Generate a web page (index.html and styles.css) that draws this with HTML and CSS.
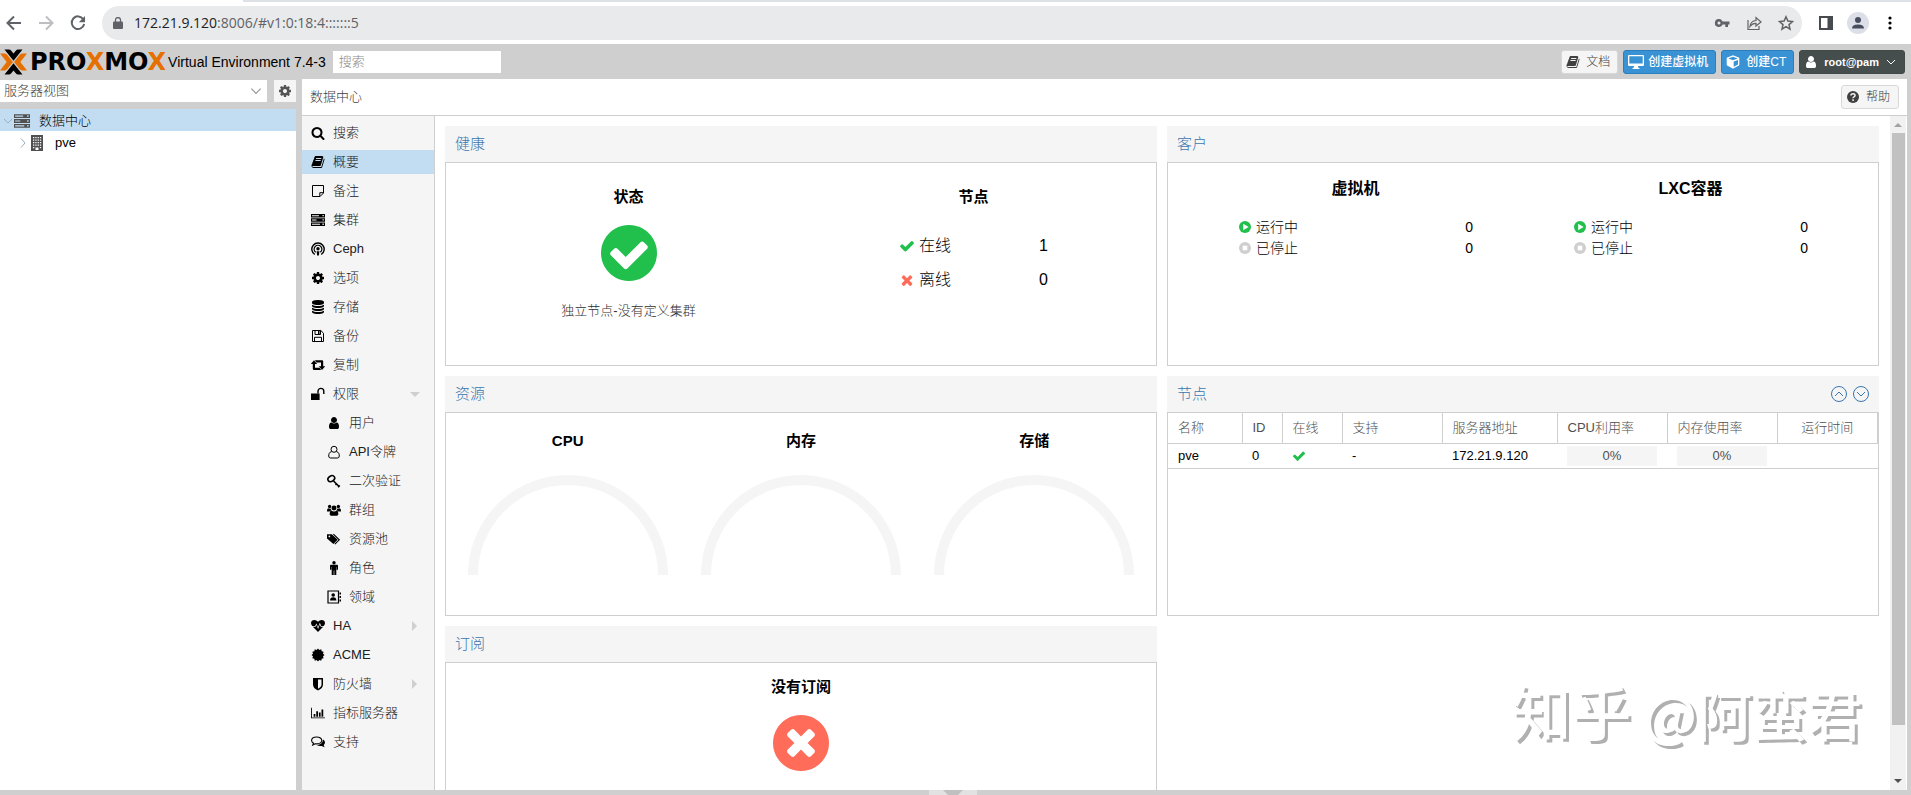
FILE: index.html
```html
<!DOCTYPE html>
<html lang="zh-CN">
<head>
<meta charset="utf-8">
<title>pve - Proxmox Virtual Environment</title>
<link rel="stylesheet" href="styles.css">
</head>
<body>
<svg class="sprite" aria-hidden="true">
  <symbol id="search" viewBox="0 0 1792 1792"><path d="M1216 832q0-185-131.500-316.500t-316.500-131.500-316.500 131.500-131.500 316.500 131.500 316.500 316.500 131.500 316.500-131.500 131.500-316.500zm512 832q0 52-38 90t-90 38q-54 0-90-38l-343-342q-179 124-399 124-143 0-273.500-55.500t-225-150-150-225-55.500-273.500 55.500-273.500 150-225 225-150 273.500-55.500 273.500 55.500 225 150 150 225 55.500 273.500q0 220-124 399l343 343q37 37 37 90z"/></symbol>
  <symbol id="check" viewBox="0 0 1792 1792"><path d="M1671 566q0 40-28 68l-724 724-136 136q-28 28-68 28t-68-28l-136-136-362-362q-28-28-28-68t28-68l136-136q28-28 68-28t68 28l294 295 656-657q28-28 68-28t68 28l136 136q28 28 28 68z"/></symbol>
  <symbol id="times" viewBox="0 0 1792 1792"><path d="M1490 1322q0 40-28 68l-136 136q-28 28-68 28t-68-28l-294-294-294 294q-28 28-68 28t-68-28l-136-136q-28-28-28-68t28-68l294-294-294-294q-28-28-28-68t28-68l136-136q28-28 68-28t68 28l294 294 294-294q28-28 68-28t68 28l136 136q28 28 28 68t-28 68l-294 294 294 294q28 28 28 68z"/></symbol>
  <symbol id="check-circle" viewBox="128 128 1536 1536"><path d="M1412 734q0-28-18-46l-91-90q-19-19-45-19t-45 19l-408 407-226-226q-19-19-45-19t-45 19l-91 90q-18 18-18 46 0 27 18 45l362 362q19 19 45 19 27 0 46-19l543-543q18-18 18-45zm252 162q0 209-103 385.500t-279.500 279.500-385.500 103-385.500-103-279.500-279.500-103-385.500 103-385.500 279.500-279.500 385.500-103 385.500 103 279.500 279.500 103 385.500z"/></symbol>
  <symbol id="times-circle" viewBox="128 128 1536 1536"><path d="M1277 1122q0-26-19-45l-181-181 181-181q19-19 19-45 0-27-19-46l-90-90q-19-19-46-19-26 0-45 19l-181 181-181-181q-19-19-45-19-27 0-46 19l-90 90q-19 19-19 46 0 26 19 45l181 181-181 181q-19 19-19 45 0 27 19 46l90 90q19 19 46 19 26 0 45-19l181-181 181 181q19 19 45 19 27 0 46-19l90-90q19-19 19-46zm387-226q0 209-103 385.500t-279.500 279.500-385.500 103-385.500-103-279.500-279.500-103-385.500 103-385.500 279.500-279.500 385.500-103 385.500 103 279.500 279.500 103 385.500z"/></symbol>
  <symbol id="cog" viewBox="0 0 1792 1792"><path d="M1152 896q0-106-75-181t-181-75-181 75-75 181 75 181 181 75 181-75 75-181zm512-109v222q0 12-8 23t-20 13l-185 28q-19 54-39 91 35 50 107 138 10 12 10 25t-9 23q-27 37-99 108t-94 71q-12 0-26-9l-138-108q-44 23-91 38-16 136-29 186-7 28-36 28h-222q-14 0-24.500-8.500t-11.500-21.500l-28-184q-49-16-90-37l-141 107q-10 9-25 9-14 0-25-11-126-114-165-168-7-10-7-23 0-12 8-23 15-21 51-66.500t54-70.500q-27-50-41-99l-183-27q-13-2-21-12.500t-8-23.500v-222q0-12 8-23t19-13l186-28q14-46 39-92-40-57-107-138-10-12-10-24 0-10 9-23 26-36 98.500-107.500t94.500-71.500q13 0 26 10l138 107q44-23 91-38 16-136 29-186 7-28 36-28h222q14 0 24.500 8.500t11.500 21.500l28 184q49 16 90 37l142-107q9-9 24-9 13 0 25 10 129 119 165 170 7 8 7 22 0 12-8 23-15 21-51 66.500t-54 70.500q26 50 41 98l183 28q13 2 21 12.500t8 23.500z"/></symbol>
  <symbol id="database" viewBox="0 0 1792 1792"><path d="M896 768q237 0 443-43t325-127v170q0 69-103 128t-280 93.500-385 34.500-385-34.500-280-93.500-103-128v-170q119 84 325 127t443 43zm0 768q237 0 443-43t325-127v170q0 69-103 128t-280 93.500-385 34.500-385-34.500-280-93.500-103-128v-170q119 84 325 127t443 43zm0-384q237 0 443-43t325-127v170q0 69-103 128t-280 93.500-385 34.500-385-34.500-280-93.500-103-128v-170q119 84 325 127t443 43zm0-1152q208 0 385 34.500t280 93.500 103 128v128q0 69-103 128t-280 93.500-385 34.500-385-34.500-280-93.500-103-128v-128q0-69 103-128t280-93.500 385-34.500z"/></symbol>
  <symbol id="user" viewBox="0 0 1792 1792"><path d="M1536 1399q0 109-62.500 187t-150.500 78h-854q-88 0-150.500-78t-62.500-187q0-85 8.500-160.500t31.500-152 58.500-131 94-89 134.500-34.500q131 128 313 128t313-128q76 0 134.500 34.500t94 89 58.500 131 31.500 152 8.500 160.500zm-256-887q0 159-112.500 271.500t-271.500 112.500-271.500-112.500-112.500-271.500 112.500-271.500 271.500-112.500 271.500 112.500 112.500 271.500z"/></symbol>
  <symbol id="user-o" viewBox="0 0 14 14"><g fill="none" stroke="currentColor"><circle cx="7" cy="4.300" r="3"/><path d="M4.600 6.600C2.200 7 1.700 9.200 1.700 11q0 2 1.900 2h6.800q1.900 0 1.900-2c0-1.800-.5-4-2.900-4.400"/></g></symbol>
  <symbol id="book" viewBox="0 0 1792 1792"><path d="M1703 478q40 57 18 129l-275 906q-19 64-76.500 107.500t-122.500 43.500h-923q-77 0-148.500-53.500t-99.500-131.500q-24-67-2-127 0-4 3-27t4-37q1-8-3-21.500t-3-19.500q2-11 8-21t16.500-23.500 16.500-23.500q23-38 45-91.500t30-91.500q3-10 .5-30t-.5-28q3-11 17-28t17-23q21-36 42-92t25-90q1-9-2.500-32t.5-28q4-13 22-30.500t22-22.500q19-26 42.500-84.500t27.500-96.500q1-8-3-25.500t-2-26.500q2-8 9-18t18-23 17-21q8-12 16.500-30.500t15-35 16-36 19.500-32 26.500-23.500 36-11.500 47.500 5.500l-1 3q38-9 51-9h761q74 0 114 56t18 130l-274 906q-36 119-71.500 153.500t-128.500 34.500h-869q-27 0-38 15-11 16-1 43 24 70 144 70h923q29 0 56-15.500t35-41.500l300-987q7-22 5-57 38 15 59 43zm-1064 2q-4 13 2 22.500t20 9.500h608q13 0 25.500-9.500t16.500-22.500l21-64q4-13-2-22.500t-20-9.500h-608q-13 0-25.500 9.500t-16.500 22.500zm-83 256q-4 13 2 22.500t20 9.500h608q13 0 25.500-9.500t16.500-22.500l21-64q4-13-2-22.500t-20-9.500h-608q-13 0-25.500 9.500t-16.500 22.500z"/></symbol>
  <symbol id="note" viewBox="0 0 14 14"><path d="M1.500 1.500h11v7.500l-3.500 3.500H1.500zM12.500 8.700H8.800v3.800" fill="none" stroke="currentColor"/></symbol>
  <symbol id="server" viewBox="0 0 14 14"><path fill-rule="evenodd" d="M0 1h14v3.400H0zM0 5.300h14v3.400H0zM0 9.600h14V13H0zM1 2.200v1h7v-1zM1 6.500v1h4.500v-1zM1 10.800v1h8v-1zM11.500 2v1.300h1.300V2zM11.500 6.300v1.300h1.300V6.300zM11.500 10.600v1.300h1.300v-1.300z"/></symbol>
  <symbol id="ceph" viewBox="0 0 14 14"><g fill="none" stroke="currentColor" stroke-width="1.400"><path d="M3.800 12.500A6.200 6.200 0 1 1 10.200 12.500"/><path d="M4.700 10.300A3.900 3.900 0 1 1 9.300 10.300" stroke-width="1.200"/></g><circle cx="7" cy="6.800" r="1.700"/><path d="M5.600 9.200h2.800l-.5 4.300H6.100z"/></symbol>
  <symbol id="save" viewBox="0 0 14 14"><path d="M1.500 1.500h8.300l2.700 2.700v8.300h-11zM4 1.500v4h5.500v-4M3.500 12.500V8.300h7v4.200" fill="none" stroke="currentColor"/><path d="M7 2h1.500v3H7z"/></symbol>
  <symbol id="retweet" viewBox="0 0 14 14"><path d="M3 2.200L6.200 6H4v3.800h4.500l1.700 2.200H3q-1.200 0-1.200-1.200V6H-.2zM11 12L7.800 8.200H10V4.400H5.500L3.800 2.200H11q1.200 0 1.200 1.200v4.800h2z"/></symbol>
  <symbol id="unlock" viewBox="0 0 14 14"><path d="M0 6.500h8.600V13H0z"/><path d="M7 6.500V4.300a2.900 2.900 0 0 1 5.800 0V7" fill="none" stroke="currentColor" stroke-width="1.400"/></symbol>
  <symbol id="key" viewBox="0 0 14 14"><g fill="none" stroke="currentColor" stroke-width="1.600"><ellipse cx="4.300" cy="4.700" rx="3.600" ry="2.700" transform="rotate(-35 4.300 4.700)"/><path d="M6.500 7l5.700 5.500M8.500 11l1.600-1.500M11 13.300l1.800-1.800"/></g></symbol>
  <symbol id="users" viewBox="0 0 16 14"><circle cx="3" cy="3" r="1.900"/><circle cx="13" cy="3" r="1.900"/><circle cx="8" cy="4.700" r="2.800"/><path d="M0 8.700q0-3.700 1.700-3.700 1.300.8 2.600.3.100 1.300.9 2-1.400.2-2.100 1.400zM16 8.700q0-3.700-1.700-3.700-1.300.8-2.600.3-.1 1.300-.9 2 1.400.2 2.100 1.400zM4.800 7.700Q8 9.700 11.200 7.700q1.800.5 1.800 4 0 1.800-1.800 1.800H4.800Q3 13.500 3 11.700q0-3.500 1.800-4z"/></symbol>
  <symbol id="tags" viewBox="0 0 16 14"><path fill-rule="evenodd" d="M0 1.500h5.500l6.700 6.300-4.900 5L0 6.500zM2.700 3a1 1 0 1 0 0 2 1 1 0 0 0 0-2z"/><path d="M7.300 1.500l6.700 6.400-5 5" fill="none" stroke="currentColor" stroke-width="1.300"/></symbol>
  <symbol id="male" viewBox="0 0 14 14"><circle cx="7" cy="1.700" r="1.700"/><path d="M4 3.800h6q1 0 1 1v4H9.600V6h-.3v8H7.300V9.500h-.6V14h-2V6h-.3v2.800H3v-4q0-1 1-1z"/></symbol>
  <symbol id="address" viewBox="0 0 14 14"><path d="M1 1h10.500v12H1z" fill="none" stroke="currentColor" stroke-width="1.200"/><circle cx="6.200" cy="5" r="1.800"/><path d="M3 10.600q0-3.400 3.200-3.400t3.200 3.400zM12.500 2.500H14v2h-1.500zM12.500 6H14v2h-1.500zM12.500 9.500H14v2h-1.500z"/></symbol>
  <symbol id="heartbeat" viewBox="0 0 14 14"><path d="M7 13L1.800 7.800h2.800l.8-1.700 1.700 4 1.700-4.600 1 2.300h2.400zM1.300 7Q0 5.500 0 4 .2 1 3.500 1 5.500 1 7 2.800 8.500 1 10.500 1 13.800 1 14 4q0 1.500-1.300 3h-2.400L8.800 3.700 7 8.200 5.400 4.500 4.100 7z"/></symbol>
  <symbol id="cert" viewBox="0 0 14 14"><path transform="translate(7 7)" d="M6.500 0L5 1.350 5.630 3.250 3.680 3.680 3.250 5.630 1.350 5 0 6.500-1.350 5-3.250 5.630-3.680 3.680-5.630 3.250-5 1.350-6.500 0-5-1.350-5.630-3.250-3.680-3.680-3.250-5.630-1.350-5 0-6.500 1.350-5 3.250-5.630 3.680-3.680 5.630-3.250 5-1.350z"/></symbol>
  <symbol id="shield" viewBox="0 0 14 14"><path fill-rule="evenodd" d="M2 1h10v6.500q0 3.800-5 6-5-2.200-5-6zM7 2.600v9.200q3.500-1.800 3.500-4.300V2.600z"/></symbol>
  <symbol id="chart" viewBox="0 0 16 14"><path d="M0 1h1v11h15v1H0zM3 8h2v3.300H3zM6 5h2v6.300H6zM9 6.300h2v5H9zM12 3h2v8.300h-2z"/></symbol>
  <symbol id="comments" viewBox="0 0 14 14"><path d="M5.700 2C2.700 2 .6 3.500.6 5.500c0 1.200.8 2.100 1.900 2.800L1.800 10l2.300-1.200c4 .5 6.700-1.200 6.700-3.300C10.800 3.500 8.700 2 5.700 2z" fill="none" stroke="currentColor" stroke-width="1.100"/><path d="M12 4.500q2 1.100 2 3 0 1.400-1.300 2.500l.9 2.300-3-1.400q-3 .4-5-1Q11.500 9.900 12 4.500z"/></symbol>
  <symbol id="building" viewBox="0 0 14 16"><path fill-rule="evenodd" d="M1 0h12v16H1zM3 2v1.300h1.300V2zM5.300 2v1.300h1.300V2zM7.600 2v1.300h1.300V2zM9.900 2v1.300h1.300V2zM3 4.500v1.300h1.300V4.500zM5.300 4.500v1.300h1.300V4.500zM7.600 4.500v1.300h1.300V4.500zM9.900 4.500v1.300h1.300V4.500zM3 7v1.300h1.300V7zM5.300 7v1.300h1.300V7zM7.600 7v1.300h1.300V7zM9.900 7v1.300h1.300V7zM3 9.500v1.300h1.300V9.500zM5.300 9.500v1.300h1.300V9.500zM7.600 9.500v1.300h1.300V9.500zM9.900 9.500v1.300h1.300V9.500zM3 12v1.300h1.300V12zM9.900 12v1.300h1.300V12zM5.500 12.500V15h3v-2.500z"/></symbol>
  <symbol id="question" viewBox="0 0 14 14"><circle cx="7" cy="7" r="6"/><path d="M4.900 5.500Q5 3.700 7 3.700t2.100 1.600Q9.100 6.300 8 6.900T7.100 8.200M7.100 9.300v1.600" fill="none" stroke="#f5f5f5" stroke-width="1.500"/></symbol>
  <symbol id="desktop" viewBox="0 0 16 14"><path fill-rule="evenodd" d="M1 0h14q1 0 1 1v9q0 1-1 1h-5l.5 2h1V14h-7v-1h1l.5-2H1q-1 0-1-1V1q0-1 1-1zM1.300 1.300v7.200h13.400V1.300z"/></symbol>
  <symbol id="cube" viewBox="0 0 14 14"><path fill-rule="evenodd" d="M7 .3l6.300 2.500v7.500L7 13.700.7 10.300V2.800zM7 1.800L2.300 3.500 7 5.300l4.700-1.800zM7.700 6.500v5.300l4.300-2.200V4.900z"/></symbol>
  <symbol id="play" viewBox="0 0 14 14"><circle cx="7" cy="7" r="6"/><path d="M5.200 3.700L10.600 7l-5.400 3.300z" fill="#fff"/></symbol>
  <symbol id="stop" viewBox="0 0 14 14"><circle cx="7" cy="7" r="6"/><path d="M4.700 4.700h4.600v4.600H4.700z" fill="#fff"/></symbol>
  <symbol id="chev-down" viewBox="0 0 12 12"><path d="M2 4l4 4 4-4" fill="none" stroke="currentColor"/></symbol>
  <symbol id="chev-right" viewBox="0 0 12 12"><path d="M4 1.500L8 6l-4 4.500" fill="none" stroke="currentColor"/></symbol>
  <symbol id="circle-up" viewBox="0 0 16 16"><path d="M4 10l4-4 4 4M8 .5a7.500 7.500 0 1 1 0 15 7.500 7.500 0 0 1 0-15z" fill="none" stroke="currentColor"/></symbol>
  <symbol id="circle-down" viewBox="0 0 16 16"><path d="M4 6l4 4 4-4M8 .5a7.500 7.500 0 1 1 0 15 7.500 7.500 0 0 1 0-15z" fill="none" stroke="currentColor"/></symbol>
  <symbol id="gauge" viewBox="0 0 200 100"><path d="M5 100a95 95 0 0 1 190 0" fill="none" stroke="#f5f5f5" stroke-width="10"/></symbol>
</svg>

<div class="tabstrip"></div>
<div class="toolbar">
  <button class="tool" aria-label="后退"><svg viewBox="0 0 16 16"><path d="M15 8H2M8 1.500L1.500 8 8 14.500" fill="none" stroke="#5f6368" stroke-width="2"/></svg></button>
  <button class="tool" aria-label="前进"><svg viewBox="0 0 16 16"><path d="M1 8h13M8 1.500L14.500 8 8 14.500" fill="none" stroke="#bcbec1" stroke-width="2"/></svg></button>
  <button class="tool" aria-label="刷新"><svg viewBox="0 0 16 16"><path d="M13.300 4.200A6.300 6.300 0 1 0 14.200 9" fill="none" stroke="#5f6368" stroke-width="2"/><path d="M15 1v6.200H8.800z" fill="#5f6368"/></svg></button>
  <div class="omnibox">
    <svg class="lock" viewBox="0 0 10 12"><path d="M1 4.500h8q1 0 1 1V11q0 1-1 1H1q-1 0-1-1V5.500q0-1 1-1z" fill="#5f6368"/><path d="M2.500 5V3a2.500 2.500 0 0 1 5 0v2" fill="none" stroke="#5f6368" stroke-width="1.300"/></svg>
    <span class="url"><b>172.21.9.120</b>:8006/#v1:0:18:4:::::::5</span>
    <button class="tool" aria-label="密码"><svg viewBox="0 0 16 16"><path fill-rule="evenodd" fill="#5f6368" d="M5 4a4 4 0 1 1-1 7.900A4 4 0 0 1 5 4zm0 2.600a1.500 1.500 0 1 0 0 3 1.500 1.500 0 0 0 0-3z"/><path fill="#5f6368" d="M8 6.500h7.500v3H14V12h-2.700V9.500H8z"/></svg></button>
    <button class="tool" aria-label="分享"><svg viewBox="0 0 16 16"><path d="M2 5v9.500h11V11M4 11.500Q4.500 6 10 5.500V2.500L15 7l-5 4V8.300Q6.500 8 4 11.500z" fill="none" stroke="#5f6368" stroke-width="1.200"/></svg></button>
    <button class="tool" aria-label="收藏"><svg viewBox="0 0 16 16"><path d="M8 1.800l1.900 4.300 4.600.4-3.500 3.100 1 4.600-4-2.500-4 2.500 1-4.600L1.500 6.500l4.600-.4z" fill="none" stroke="#5f6368" stroke-width="1.500"/></svg></button>
  </div>
  <button class="tool" aria-label="侧边栏"><svg viewBox="0 0 16 16"><path fill-rule="evenodd" fill="#474a4e" d="M1 1h14v14H1zM3 3v10h6.500V3z"/></svg></button>
  <button class="tool avatar" aria-label="用户"><svg viewBox="0 0 16 16"><circle cx="8" cy="5" r="3" fill="#474d5c"/><path d="M2 13.500q0-4 6-4t6 4z" fill="#474d5c"/></svg></button>
  <button class="tool" aria-label="菜单"><svg viewBox="0 0 16 16" fill="#5f6368"><circle cx="8" cy="3" r="1.600"/><circle cx="8" cy="8" r="1.600"/><circle cx="8" cy="13" r="1.600"/></svg></button>
</div>

<header class="header">
  <svg class="mark" viewBox="0 0 27 26"><g fill="#e57000"><path d="M0 4.500h4.500q1.500 0 2.600 1.200L13 13l-5.900 7.300Q6 21.500 4.500 21.500H0L6.700 13z"/><path d="M27 4.500h-4.500q-1.500 0-2.600 1.200L14 13l5.900 7.300q1.100 1.200 2.600 1.200H27L20.300 13z"/></g><g fill="#000"><path d="M4.500.5H9q1.200 0 2 1l2.500 3 2.500-3q.8-1 2-1h4.500l-9 11.200z"/><path d="M4.500 25.500H9q1.200 0 2-1l2.500-3 2.500 3q.8 1 2 1h4.500l-9-11.200z"/></g></svg>
  <span class="brand">PRO<i>X</i>MO<i>X</i></span>
  <span class="version">Virtual Environment 7.4-3</span>
  <input class="search" type="text" placeholder="搜索" aria-label="搜索">
  <div class="actions">
    <button class="btn"><svg class="ic"><use href="#book"/></svg>文档</button>
    <button class="btn blue"><svg class="ic wide"><use href="#desktop"/></svg>创建虚拟机</button>
    <button class="btn blue"><svg class="ic"><use href="#cube"/></svg>创建CT</button>
    <button class="btn dark"><svg class="ic"><use href="#user"/></svg>root@pam<svg class="ic down"><use href="#chev-down"/></svg></button>
  </div>
</header>

<div class="workspace">
  <aside class="side">
    <div class="viewbar">
      <div class="combo">
        <select aria-label="视图"><option>服务器视图</option></select>
        <svg class="ic"><use href="#chev-down"/></svg>
      </div>
      <button class="gear" aria-label="设置"><svg class="ic"><use href="#cog"/></svg></button>
    </div>
    <div class="tree">
      <div class="node selected"><svg class="arrow"><use href="#chev-down"/></svg><svg class="ic"><use href="#server"/></svg><span>数据中心</span></div>
      <div class="node child"><svg class="arrow"><use href="#chev-right"/></svg><svg class="ic"><use href="#building"/></svg><span>pve</span></div>
    </div>
  </aside>

  <main class="main">
    <div class="titlebar"><span>数据中心</span><button class="btn help"><svg class="ic"><use href="#question"/></svg>帮助</button></div>
    <div class="body">
      <nav class="nav">
        <a href="#"><svg class="ic"><use href="#search"/></svg>搜索</a>
        <a href="#" class="on"><svg class="ic"><use href="#book"/></svg>概要</a>
        <a href="#"><svg class="ic"><use href="#note"/></svg>备注</a>
        <a href="#"><svg class="ic"><use href="#server"/></svg>集群</a>
        <a href="#"><svg class="ic"><use href="#ceph"/></svg>Ceph</a>
        <a href="#"><svg class="ic"><use href="#cog"/></svg>选项</a>
        <a href="#"><svg class="ic"><use href="#database"/></svg>存储</a>
        <a href="#"><svg class="ic"><use href="#save"/></svg>备份</a>
        <a href="#"><svg class="ic"><use href="#retweet"/></svg>复制</a>
        <a href="#" class="open"><svg class="ic"><use href="#unlock"/></svg>权限</a>
        <a href="#" class="sub"><svg class="ic"><use href="#user"/></svg>用户</a>
        <a href="#" class="sub"><svg class="ic"><use href="#user-o"/></svg>API令牌</a>
        <a href="#" class="sub"><svg class="ic"><use href="#key"/></svg>二次验证</a>
        <a href="#" class="sub"><svg class="ic"><use href="#users"/></svg>群组</a>
        <a href="#" class="sub"><svg class="ic"><use href="#tags"/></svg>资源池</a>
        <a href="#" class="sub"><svg class="ic"><use href="#male"/></svg>角色</a>
        <a href="#" class="sub"><svg class="ic"><use href="#address"/></svg>领域</a>
        <a href="#" class="closed"><svg class="ic"><use href="#heartbeat"/></svg>HA</a>
        <a href="#"><svg class="ic"><use href="#cert"/></svg>ACME</a>
        <a href="#" class="closed"><svg class="ic"><use href="#shield"/></svg>防火墙</a>
        <a href="#"><svg class="ic"><use href="#chart"/></svg>指标服务器</a>
        <a href="#"><svg class="ic"><use href="#comments"/></svg>支持</a>
      </nav>

      <div class="cards">
        <section class="card">
          <h2>健康</h2>
          <div class="panel health">
            <div class="col">
              <h3>状态</h3>
              <svg class="big ok"><use href="#check-circle"/></svg>
              <p>独立节点-没有定义集群</p>
            </div>
            <div class="col">
              <h3>节点</h3>
              <div class="count"><svg class="ic ok"><use href="#check"/></svg><span>在线</span><span class="num">1</span></div>
              <div class="count"><svg class="ic bad"><use href="#times"/></svg><span>离线</span><span class="num">0</span></div>
            </div>
          </div>
        </section>

        <section class="card">
          <h2>客户</h2>
          <div class="panel guests">
            <div class="col">
              <h3>虚拟机</h3>
              <div class="count"><svg class="ic ok"><use href="#play"/></svg><span>运行中</span><span class="num">0</span></div>
              <div class="count"><svg class="ic off"><use href="#stop"/></svg><span>已停止</span><span class="num">0</span></div>
            </div>
            <div class="col">
              <h3>LXC容器</h3>
              <div class="count"><svg class="ic ok"><use href="#play"/></svg><span>运行中</span><span class="num">0</span></div>
              <div class="count"><svg class="ic off"><use href="#stop"/></svg><span>已停止</span><span class="num">0</span></div>
            </div>
          </div>
        </section>

        <section class="card">
          <h2>资源</h2>
          <div class="panel gauges">
            <div class="col"><h3>CPU</h3><svg class="gauge"><use href="#gauge"/></svg></div>
            <div class="col"><h3>内存</h3><svg class="gauge"><use href="#gauge"/></svg></div>
            <div class="col"><h3>存储</h3><svg class="gauge"><use href="#gauge"/></svg></div>
          </div>
        </section>

        <section class="card">
          <h2>节点<span class="tools"><button aria-label="上移"><svg><use href="#circle-up"/></svg></button><button aria-label="下移"><svg><use href="#circle-down"/></svg></button></span></h2>
          <div class="panel">
            <table>
              <colgroup><col class="w-name"><col class="w-id"><col class="w-online"><col class="w-support"><col class="w-addr"><col class="w-use"><col class="w-use"><col></colgroup>
              <thead><tr><th>名称</th><th>ID</th><th>在线</th><th>支持</th><th>服务器地址</th><th>CPU利用率</th><th>内存使用率</th><th class="mid">运行时间</th></tr></thead>
              <tbody><tr><td>pve</td><td>0</td><td><svg class="ic ok"><use href="#check"/></svg></td><td>-</td><td>172.21.9.120</td><td><div class="bar">0%</div></td><td><div class="bar">0%</div></td><td></td></tr></tbody>
            </table>
          </div>
        </section>

        <section class="card">
          <h2>订阅</h2>
          <div class="panel subscription">
            <h3>没有订阅</h3>
            <svg class="big bad"><use href="#times-circle"/></svg>
          </div>
        </section>
      </div>

      <div class="scroll"><span class="up"></span><span class="thumb"></span><span class="dn"></span></div>
    </div>
    <div class="watermark"><span>知乎</span> @阿蛮君</div>
  </main>
</div>
<footer class="splitter"><button aria-label="展开日志"></button></footer>
</body>
</html>
```
FILE: styles.css
```css
* { box-sizing: border-box; }

body {
  margin: 0;
  height: 100vh;
  display: flex;
  flex-direction: column;
  overflow: hidden;
  background: #cfcfcf;
  color: #000;
  font: 300 13px/18px "Liberation Sans", "Noto Sans CJK SC", sans-serif;
}

button, input, select { font: inherit; color: inherit; margin: 0; }
button { cursor: pointer; }
h2, h3, p { margin: 0; }
svg { display: block; fill: currentColor; flex: none; }
.sprite { display: none; }
.ic { width: 14px; height: 14px; }
.ok { color: #21bf4b; }
.bad { color: #ff6c59; }
.off { color: #cfcfcf; }

/* browser chrome */
.tabstrip { height: 2px; flex: none; margin-left: 243px; background: #dee1e6; box-shadow: -243px 0 #fff; }
.toolbar {
  flex: none;
  height: 42px;
  padding: 0 13px 0 6px;
  display: flex;
  align-items: center;
  gap: 16px;
  background: #fff;
}
.tool { width: 16px; height: 16px; padding: 0; border: 0; background: none; }
.tool svg { width: 16px; height: 16px; }
.omnibox {
  flex: 1;
  height: 34px;
  padding: 0 8px 0 11px;
  display: flex;
  align-items: center;
  gap: 16px;
  border-radius: 17px;
  background: #e9eaeb;
}
.lock { width: 10px; height: 12px; margin-right: -5px; }
.url { flex: 1; font: 14px/20px "Open Sans", sans-serif; color: #5f6368; }
.url b { font-weight: 400; color: #202124; }
.avatar { width: 22px; height: 22px; margin: 0 -3px; padding: 3px; border-radius: 50%; background: #dcdfe8; }

/* application header */
.header { flex: none; height: 35px; padding: 0 6px 0 0; display: flex; align-items: center; }
.mark { width: 27px; height: 26px; }
.brand { margin-left: 3px; font: bold 24px/24px "DejaVu Sans", sans-serif; }
.brand i { font-style: normal; color: #e57000; }
.version { margin-left: 2px; font-size: 14px; white-space: nowrap; }
.search { width: 168px; height: 22px; margin-left: 7px; padding: 0 6px; border: 0; background: #fff; }
.search::placeholder { color: #888; }
.actions { margin-left: auto; display: flex; gap: 5px; }
.btn {
  height: 24px;
  padding: 0 7px 0 4px;
  display: flex;
  align-items: center;
  gap: 6px;
  border: 1px solid #d8d8d8;
  border-radius: 3px;
  background: #f5f5f5;
  color: #404040;
  font-size: 12px;
}
.btn.blue { border-color: #2a7fc0; background: #3892d4; color: #fff; font-weight: 500; }
.btn.dark { border-color: #404a48; background: #464d4d; color: #fff; font-size: 11px; font-weight: 700; }
.btn .wide { width: 16px; margin-right: -2px; }
.btn .down { width: 12px; height: 12px; }

/* resource tree */
.workspace { flex: 1; min-height: 0; padding-right: 4px; display: flex; }
.side { width: 296px; display: flex; flex-direction: column; margin-right: 6px; }
.viewbar { height: 30px; padding-top: 1px; display: flex; gap: 7px; }
.combo { flex: 1; height: 22px; position: relative; background: #fff; color: #404040; }
.combo select { width: 100%; height: 22px; padding: 0 4px; border: 0; background: none; appearance: none; }
.combo .ic { position: absolute; right: 4px; top: 4px; color: #999; pointer-events: none; }
.gear { width: 22px; height: 22px; padding: 4px; border: 0; background: #f5f5f5; color: #555; }
.tree { flex: 1; background: #fff; }
.node { height: 22px; padding: 1px 0 0 2px; display: flex; align-items: center; }
.node .ic { width: 16px; height: 16px; color: #505050; }
.node span { margin-left: 9px; }
.node .arrow { width: 12px; height: 12px; color: #9ab0c0; }
.node.selected { background: #c2ddf2; }
.node.child { padding-left: 17px; }
.node.child span { margin-left: 10px; }

/* main area */
.main { flex: 1; min-width: 0; display: flex; flex-direction: column; position: relative; background: #fff; }
.titlebar {
  flex: none;
  height: 37px;
  padding: 0 8px;
  display: flex;
  align-items: center;
  justify-content: space-between;
  border-bottom: 1px solid #cfcfcf;
  color: #404040;
}
.help { padding: 0 8px 0 4px; }
.body { flex: 1; min-height: 0; display: flex; }
.nav {
  width: 133px;
  padding-top: 5px;
  display: flex;
  flex-direction: column;
  gap: 5px;
  border-right: 1px solid #cfcfcf;
  background: #f5f5f5;
}
.nav a {
  flex: none;
  height: 24px;
  padding: 0 14px 0 9px;
  display: flex;
  align-items: center;
  gap: 8px;
  color: #202020;
  text-decoration: none;
  white-space: nowrap;
}
.nav svg { color: #000; overflow: visible; }
.nav .on { background: #c2ddf2; }
.nav .sub { padding-left: 25px; }
.nav .open::after { content: ""; margin-left: auto; border: 5px solid transparent; border-top-color: #cfcfcf; border-bottom: 0; }
.nav .closed::after { content: ""; margin: 0 3px 0 auto; border: 5px solid transparent; border-left-color: #cfcfcf; border-right: 0; }

/* dashboard cards */
.cards {
  flex: 1;
  min-width: 0;
  padding: 10px 11px 0 10px;
  display: grid;
  grid-template-columns: 1fr 1fr;
  grid-auto-rows: 240px;
  gap: 10px;
  overflow: hidden;
}
.card { display: flex; flex-direction: column; }
.card h2 {
  height: 36px;
  padding: 0 10px;
  display: flex;
  align-items: center;
  justify-content: space-between;
  background: #f5f5f5;
  color: #3b76ae;
  font-size: 15px;
  font-weight: 300;
}
.panel { flex: 1; border: 1px solid #cfcfcf; }
.col { flex: 1; min-width: 0; display: flex; flex-direction: column; }
.panel h3 { font-size: 15px; line-height: 20px; font-weight: 700; text-align: center; }
.big { width: 56px; height: 56px; margin: 18px auto 0; }
.count { display: flex; align-items: center; }
.num { margin-left: auto; }

.health { padding: 24px 10px 0; display: flex; }
.health p { margin-top: 21px; text-align: center; color: #303030; }
.health .count { height: 34px; padding: 0 98px; gap: 4px; font-size: 16px; }
.health .ic { width: 16px; height: 16px; }
.health h3 + .count { margin-top: 22px; }

.guests { padding: 16px 20px 0; display: flex; }
.guests h3 { margin-bottom: 17px; font-size: 16px; }
.guests .count { height: 21px; padding: 0 50px; gap: 4px; font-size: 14px; }

.gauges { padding: 18px 5px 0; display: flex; }
.gauge { width: 200px; height: 100px; margin: 24px auto 0; }

.subscription { padding-top: 14px; }

.tools { display: flex; gap: 6px; }
.tools button { padding: 0; border: 0; background: none; color: #3b76ae; }
.tools svg { width: 16px; height: 16px; }

table { width: 100%; table-layout: fixed; border-collapse: collapse; }
.w-name { width: 74px; }
.w-id { width: 40px; }
.w-online { width: 60px; }
.w-support { width: 100px; }
.w-addr { width: 115px; }
.w-use { width: 110px; }
th, td { padding: 0 10px; text-align: left; white-space: nowrap; border-bottom: 1px solid #cfcfcf; }
th { height: 30px; border-right: 1px solid #cfcfcf; color: #505050; font-weight: 300; }
th.mid { text-align: center; }
td { height: 25px; }
.bar { height: 20px; line-height: 20px; background: #f5f5f5; color: #505050; text-align: center; }

/* scroll bar */
.scroll { width: 17px; display: flex; flex-direction: column; align-items: center; background: #f1f1f1; border-right: 1px solid #fff; }
.up { margin: 7px 0 6px; border: 4px solid transparent; border-bottom-color: #a3a3a3; border-top: 0; }
.thumb { width: 13px; flex: 1; margin-bottom: 54px; background: #c1c1c1; }
.dn { margin-bottom: 7px; border: 4px solid transparent; border-top-color: #505050; border-bottom: 0; }

.watermark {
  position: absolute;
  right: 45px;
  bottom: 38px;
  font: 500 55px/80px "Noto Sans CJK SC", sans-serif;
  color: #fff;
  text-shadow: 3px 3px #b0b0b0;
}
.watermark span { font-size: 60px; }

/* collapsed log panel */
.splitter { flex: none; height: 5px; padding-right: 6px; display: flex; justify-content: center; }
.splitter button { width: 48px; height: 5px; padding: 0; border: 0; background: #e2e2e2; }
.splitter button::after { content: ""; display: block; width: 10px; margin: 0 auto; border: 5px solid transparent; border-top-color: #c0c0c0; border-bottom: 0; }
```
